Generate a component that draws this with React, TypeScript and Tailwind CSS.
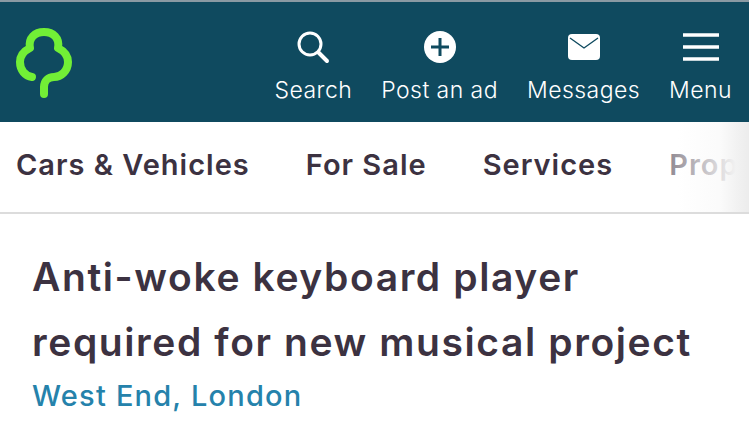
import React from 'react';

const NAV_ITEMS = ['Cars & Vehicles', 'For Sale', 'Services', 'Prop'];

const TreeLogo = () => (
  <svg width="58" height="72" viewBox="0 0 58 72" fill="none">
    <path
      d="M17 51 C10 50 5 44 5 36 C5 30 9 25 15 22 C13 12 20 6 29 6 C38 6 45 12 43 22 C49 25 53 30 53 36 C53 45 46 51 39 51 C33 51 29 55 29 61 L29 68"
      stroke="#72ef36"
      strokeWidth="8"
      strokeLinecap="round"
      strokeLinejoin="round"
    />
  </svg>
);

const SearchIcon = () => (
  <svg width="34" height="34" viewBox="0 0 34 34" fill="none" stroke="#fff" strokeLinecap="round">
    <circle cx="14" cy="14" r="11" strokeWidth="3" />
    <path d="M22.5 22.5 L31 31" strokeWidth="4" />
  </svg>
);

const PlusIcon = () => (
  <svg width="34" height="34" viewBox="0 0 34 34" fill="none">
    <circle cx="17" cy="17" r="16" fill="#fff" />
    <path d="M17 8 V26 M8 17 H26" stroke="#0f4a5f" strokeWidth="3" />
  </svg>
);

const MailIcon = () => (
  <svg width="34" height="34" viewBox="0 0 34 34" fill="none">
    <rect x="1" y="4" width="32" height="26" rx="4" fill="#fff" />
    <path d="M3 8 L17 18 L31 8" stroke="#0f4a5f" strokeWidth="1.4" />
  </svg>
);

const MenuIcon = () => (
  <svg width="38" height="34" viewBox="0 0 38 34" fill="none" stroke="#fff" strokeWidth="3.4">
    <path d="M1 5 H37 M1 17 H37 M1 29 H37" />
  </svg>
);

const HeaderLink = ({ icon, label }: { icon: React.ReactNode; label: string }) => (
  <div className="flex flex-col items-center">
    <div className="h-[34px] flex items-center justify-center">{icon}</div>
    <span className="mt-[10px] text-[23px] leading-[32px] font-light tracking-[0.45px] text-white whitespace-nowrap">{label}</span>
  </div>
);

export default function App() {
  return (
    <div className="w-[749px] h-[431px] overflow-hidden bg-white font-['Inter',sans-serif]">
      <header className="h-[122px] bg-[#0f4a5f] border-t-2 border-[#8a9aa3] flex items-start justify-between pl-[15px] pr-[17px]">
        <div className="mt-[24px]">
          <TreeLogo />
        </div>
        <div className="flex gap-[29px] pt-[28px]">
          <HeaderLink icon={<SearchIcon />} label="Search" />
          <HeaderLink icon={<PlusIcon />} label="Post an ad" />
          <HeaderLink icon={<MailIcon />} label="Messages" />
          <HeaderLink icon={<MenuIcon />} label="Menu" />
        </div>
      </header>

      <nav className="relative h-[92px] border-b-2 border-[#dcdcdc] flex items-center gap-[56px] pl-[16px] pb-[4px] overflow-hidden">
        {NAV_ITEMS.map(item => (
          <span key={item} className="text-[29px] font-semibold tracking-[1px] text-[#3c3241] whitespace-nowrap">
            {item}
          </span>
        ))}
        <div className="absolute right-0 top-0 bottom-0 w-[130px] bg-[linear-gradient(to_right,rgba(255,255,255,0)_0%,rgba(255,255,255,0.5)_45%,rgba(250,250,250,0.85)_78%,rgba(242,242,242,1)_90%,#ececec_100%)]" />
      </nav>

      <main className="pt-[30px] pl-[32px]">
        <h1 className="text-[39px] leading-[65px] font-semibold tracking-[1.6px] text-[#3c3241] whitespace-nowrap">
          Anti-woke keyboard player
          <br />
          required for new musical project
        </h1>
        <div className="mt-[2px] text-[29px] leading-[40px] font-medium tracking-[1.2px] text-[#2582ab]">West End, London</div>
      </main>
    </div>
  );
}
